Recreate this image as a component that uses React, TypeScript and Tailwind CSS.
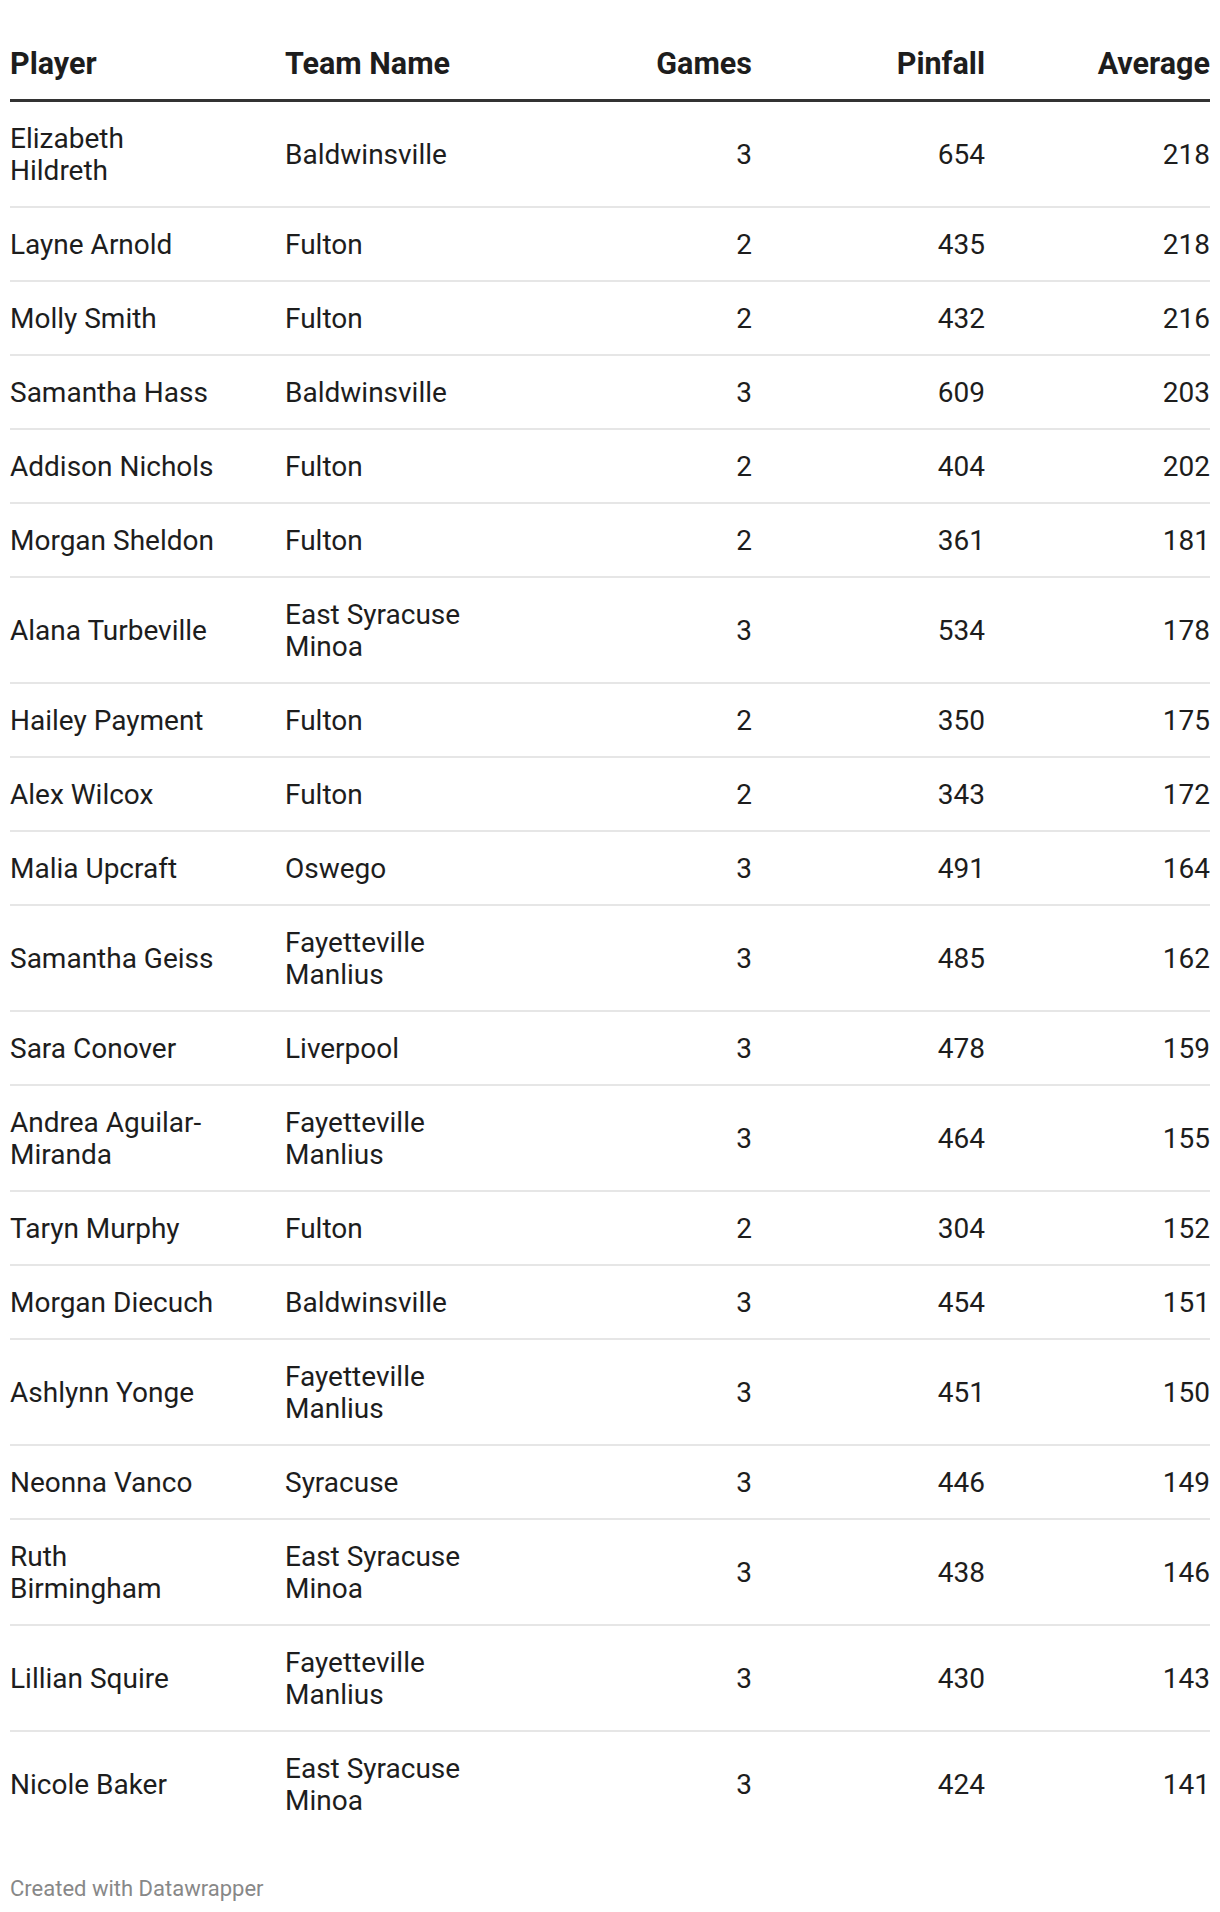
import React from "react";

type Row = { p: string; t: string; g: number; pf: number; a: number };

const rows: Row[] = [
  { p: "Elizabeth Hildreth", t: "Baldwinsville", g: 3, pf: 654, a: 218 },
  { p: "Layne Arnold", t: "Fulton", g: 2, pf: 435, a: 218 },
  { p: "Molly Smith", t: "Fulton", g: 2, pf: 432, a: 216 },
  { p: "Samantha Hass", t: "Baldwinsville", g: 3, pf: 609, a: 203 },
  { p: "Addison Nichols", t: "Fulton", g: 2, pf: 404, a: 202 },
  { p: "Morgan Sheldon", t: "Fulton", g: 2, pf: 361, a: 181 },
  { p: "Alana Turbeville", t: "East Syracuse Minoa", g: 3, pf: 534, a: 178 },
  { p: "Hailey Payment", t: "Fulton", g: 2, pf: 350, a: 175 },
  { p: "Alex Wilcox", t: "Fulton", g: 2, pf: 343, a: 172 },
  { p: "Malia Upcraft", t: "Oswego", g: 3, pf: 491, a: 164 },
  { p: "Samantha Geiss", t: "Fayetteville Manlius", g: 3, pf: 485, a: 162 },
  { p: "Sara Conover", t: "Liverpool", g: 3, pf: 478, a: 159 },
  { p: "Andrea Aguilar-Miranda", t: "Fayetteville Manlius", g: 3, pf: 464, a: 155 },
  { p: "Taryn Murphy", t: "Fulton", g: 2, pf: 304, a: 152 },
  { p: "Morgan Diecuch", t: "Baldwinsville", g: 3, pf: 454, a: 151 },
  { p: "Ashlynn Yonge", t: "Fayetteville Manlius", g: 3, pf: 451, a: 150 },
  { p: "Neonna Vanco", t: "Syracuse", g: 3, pf: 446, a: 149 },
  { p: "Ruth Birmingham", t: "East Syracuse Minoa", g: 3, pf: 438, a: 146 },
  { p: "Lillian Squire", t: "Fayetteville Manlius", g: 3, pf: 430, a: 143 },
  { p: "Nicole Baker", t: "East Syracuse Minoa", g: 3, pf: 424, a: 141 },
];

export default function App() {
  return (
    <div
      className="w-[1220px] bg-white text-[#1d1d1d]"
      style={{ fontFamily: "Roboto, 'Liberation Sans', sans-serif" }}
    >
      <div className="ml-[10px] w-[1200px]">
        {/* Header */}
        <div className="flex items-end pt-[48px] pb-[19px] border-b-[3px] border-[#333333] text-[30.5px] leading-[32px] font-bold">
          <div className="w-[275px] shrink-0">Player</div>
          <div className="w-[230px] shrink-0">Team Name</div>
          <div className="w-[237px] shrink-0 text-right">Games</div>
          <div className="w-[233px] shrink-0 text-right">Pinfall</div>
          <div className="flex-1 text-right">Average</div>
        </div>
        {/* Body */}
        {rows.map((r, i) => (
          <div
            key={i}
            className={
              "flex items-center pt-[21px] pb-[19px] text-[28px] leading-[32px] " +
              (i < rows.length - 1 ? "border-b-2 border-[#e6e6e6]" : "")
            }
          >
            <div className="w-[275px] shrink-0">
              <div className="max-w-[210px]">{r.p}</div>
            </div>
            <div className="w-[230px] shrink-0">
              <div className="max-w-[225px]">{r.t}</div>
            </div>
            <div className="w-[237px] shrink-0 text-right">{r.g}</div>
            <div className="w-[233px] shrink-0 text-right">{r.pf}</div>
            <div className="flex-1 text-right">{r.a}</div>
          </div>
        ))}
        {/* Footer */}
        <div className="mt-[40px] pb-[10px] text-[22px] leading-[26px] text-[#888888]">
          Created with Datawrapper
        </div>
      </div>
    </div>
  );
}
